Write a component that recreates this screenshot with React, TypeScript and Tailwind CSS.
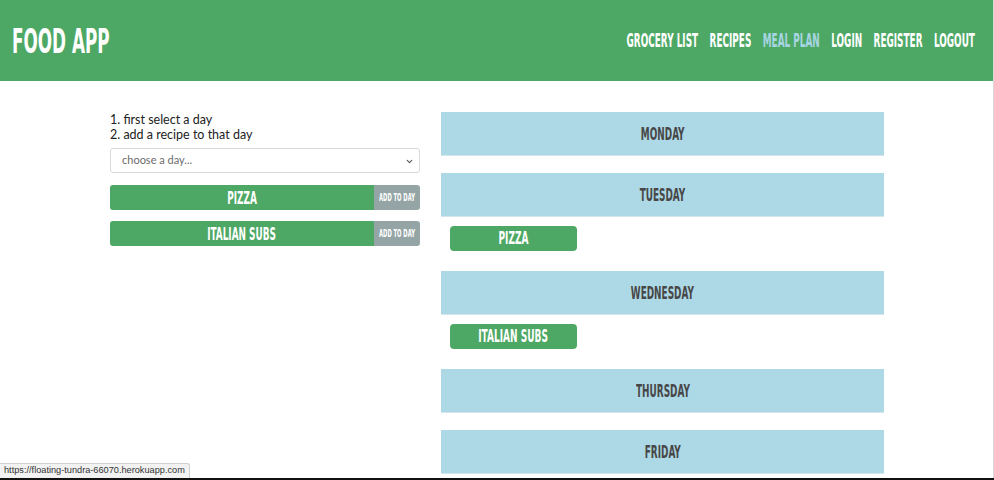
import React from 'react';
import { ChevronDown } from 'lucide-react';

const display = "font-['Liberation_Sans_Narrow','DejaVu_Sans_Condensed','Liberation_Sans',sans-serif] font-bold font-stretch-condensed uppercase";

const navLinks = ['Grocery List', 'Recipes', 'Meal Plan', 'Login', 'Register', 'Logout'];

const recipes = ['Pizza', 'Italian Subs'];

const days: { name: string; meals: string[] }[] = [
  { name: 'Monday', meals: [] },
  { name: 'Tuesday', meals: ['Pizza'] },
  { name: 'Wednesday', meals: ['Italian Subs'] },
  { name: 'Thursday', meals: [] },
  { name: 'Friday', meals: [] },
  { name: 'Saturday', meals: [] },
  { name: 'Sunday', meals: [] },
];

function Navbar() {
  return (
    <header className="h-[81px] bg-[#4ea865] flex items-center justify-between pl-[12px] pr-[18px]">
      <h1 className={`${display} text-white text-[34px] leading-none inline-block scale-x-[0.55] origin-left`}>
        Food App
      </h1>
      <nav className="flex items-center gap-[22px] scale-x-[0.52] origin-right">
        {navLinks.map(link => (
          <a
            key={link}
            href="#"
            className={`${display} text-[19px] leading-none ${link === 'Meal Plan' ? 'text-[#a8d5e2]' : 'text-white'}`}
          >
            {link}
          </a>
        ))}
      </nav>
    </header>
  );
}

function RecipePicker() {
  return (
    <div className="w-[310px] font-['Lato',sans-serif] text-[#222]">
      <p className="text-[12.5px] leading-[15px]">1. first select a day</p>
      <p className="text-[12.5px] leading-[15px]">2. add a recipe to that day</p>
      <div className="relative mt-[6px] h-[25px] border border-[#d9d9d9] rounded-[3px] bg-white flex items-center pl-[11px]">
        <span className="text-[11px] text-[#6b6b6b]">choose a day...</span>
        <ChevronDown className="absolute right-[5px] top-[8px] w-[9px] h-[9px] text-[#555]" strokeWidth={3} />
      </div>
      <div className="mt-[12px] flex flex-col gap-[11px]">
        {recipes.map(recipe => (
          <div key={recipe} className="flex h-[25px] rounded-[3px] overflow-hidden">
            <div className="flex-1 bg-[#4ea865] flex items-center justify-center">
              <span className={`${display} text-white text-[18px] leading-none inline-block scale-x-[0.55]`}>{recipe}</span>
            </div>
            <button className="w-[46px] bg-[#95a5a6] flex items-center justify-center">
              <span className={`${display} text-white text-[10px] leading-none whitespace-nowrap inline-block scale-x-[0.58]`}>Add to day</span>
            </button>
          </div>
        ))}
      </div>
    </div>
  );
}

function DayColumn() {
  return (
    <div className="w-[443px]">
      {days.map(day => (
        <div key={day.name} className="mb-[17px]">
          <div className="h-[44px] bg-[#add8e6] border-b border-[#d4e6ec] flex items-center justify-center">
            <span className={`${display} text-[#474747] text-[18px] leading-none inline-block scale-x-[0.55]`}>{day.name}</span>
          </div>
          {day.meals.length > 0 && (
            <div className="pt-[9px] pb-[3px] pl-[9px] flex flex-col gap-[8px]">
              {day.meals.map(meal => (
                <div key={meal} className="w-[127px] h-[25px] bg-[#4ea865] rounded-[4px] flex items-center justify-center">
                  <span className={`${display} text-white text-[17px] leading-none inline-block scale-x-[0.59]`}>{meal}</span>
                </div>
              ))}
            </div>
          )}
        </div>
      ))}
    </div>
  );
}

export default function App() {
  return (
    <div className="min-h-screen bg-white border-r border-[#d8d8d8]">
      <Navbar />
      <main className="flex gap-[21px] pl-[110px] pt-[31px]">
        <RecipePicker />
        <DayColumn />
      </main>
      <div className="fixed left-0 bottom-[2px] h-[15px] w-[190px] px-[4px] bg-[#f2f2f2] border-t border-r border-[#cfcfcf] rounded-tr-[3px] flex items-center font-['Liberation_Sans',sans-serif] text-[9.2px] text-[#333] whitespace-nowrap">
        https://floating-tundra-66070.herokuapp.com
      </div>
      <div className="fixed left-0 right-0 bottom-0 h-[2px] bg-[#111]" />
    </div>
  );
}
